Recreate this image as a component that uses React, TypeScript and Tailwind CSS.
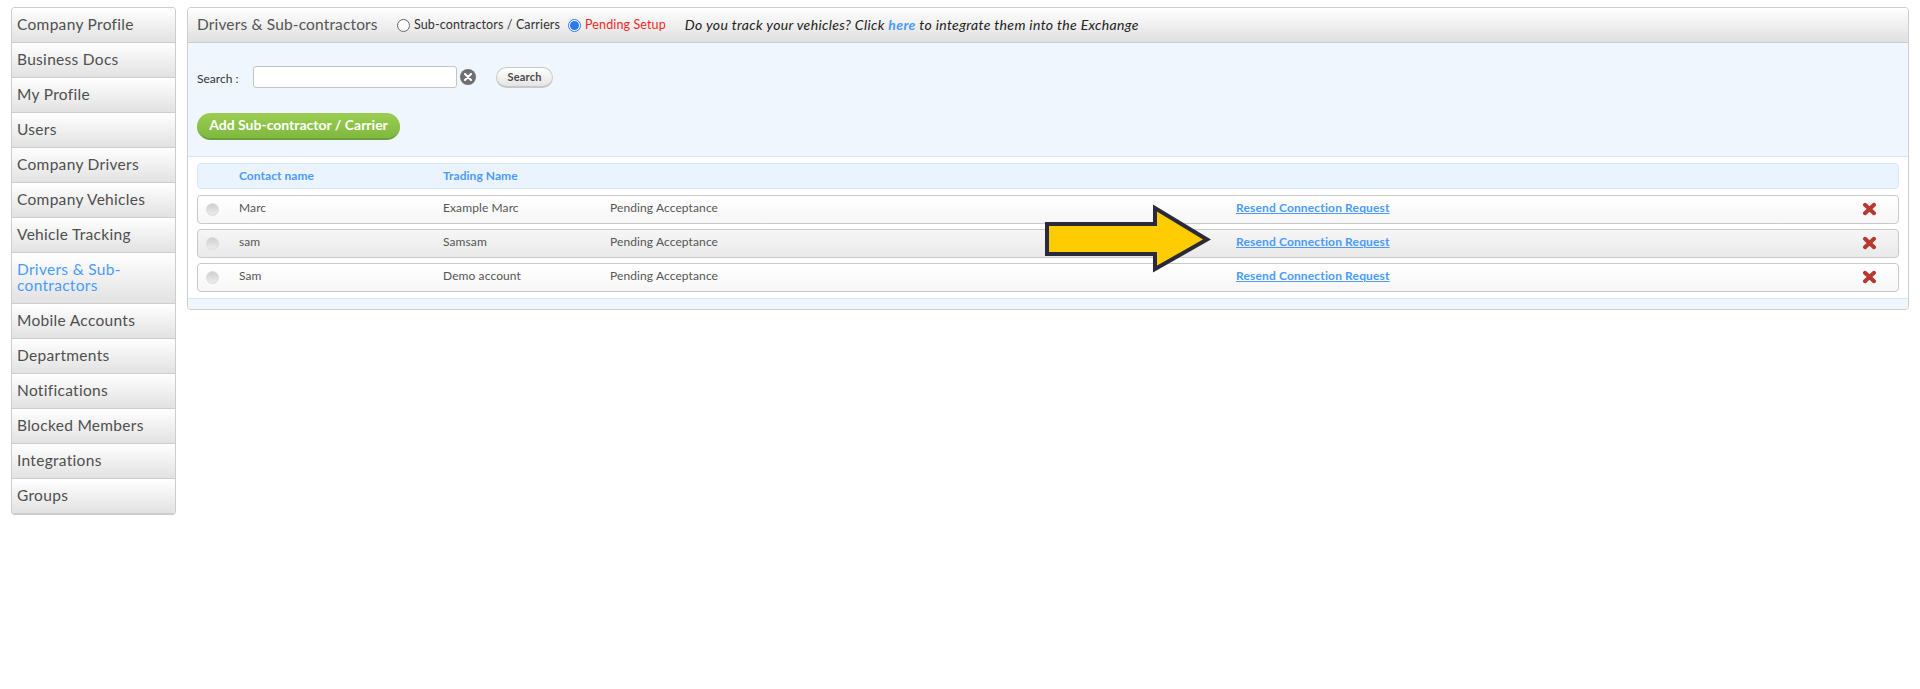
import React from 'react'

const menu = [
  'Company Profile',
  'Business Docs',
  'My Profile',
  'Users',
  'Company Drivers',
  'Company Vehicles',
  'Vehicle Tracking',
  'Drivers & Sub-contractors',
  'Mobile Accounts',
  'Departments',
  'Notifications',
  'Blocked Members',
  'Integrations',
  'Groups',
]

const rows = [
  { contact: 'Marc', trading: 'Example Marc', alt: false },
  { contact: 'sam', trading: 'Samsam', alt: true },
  { contact: 'Sam', trading: 'Demo account', alt: false },
]

function RemoveIcon() {
  return (
    <svg width="15" height="14" viewBox="0 0 15 14">
      <path d="M3 2.8 L12 11.2 M12 2.8 L3 11.2" stroke="#b8382f" strokeWidth="4" strokeLinecap="round" />
    </svg>
  )
}

function Sidebar() {
  return (
    <div className="w-[165px] shrink-0 rounded-[4px] border border-[#cdcdcd] border-b-2 overflow-hidden self-start">
      {menu.map((item) => {
        const active = item === 'Drivers & Sub-contractors'
        return (
          <div
            key={item}
            className={`flex items-center pl-[5px] pr-2 pb-[2px] bg-gradient-to-b from-white to-[#e2e2e2] border-b border-[#cdcdcd] last:border-b-0 last:h-[34px] text-[15.5px] leading-[16px] tracking-[0.3px] ${
              active ? 'h-[51px] text-[#4a9bff]' : 'h-[35px] text-[#4f4f4f]'
            }`}
          >
            {item}
          </div>
        )
      })}
    </div>
  )
}

function Header() {
  return (
    <div className="flex items-center h-[35px] pl-[9px] bg-gradient-to-b from-white to-[#e0e0e0] border-b border-[#cdcdcd]">
      <span className="text-[15.5px] tracking-[0.15px] text-[#555555] w-[200px]">Drivers &amp; Sub-contractors</span>
      <span className="w-[13px] h-[13px] rounded-full border border-[#666666] bg-white" />
      <span className="ml-[4px] text-[12.5px] tracking-[0.12px] text-[#333333]">Sub-contractors / Carriers</span>
      <span className="ml-[8px] w-[13px] h-[13px] rounded-full border border-[#2a7af0] bg-white flex items-center justify-center">
        <span className="w-[9px] h-[9px] rounded-full bg-[#2a7af0]" />
      </span>
      <span className="ml-[4px] text-[12.5px] tracking-[0.12px] text-[#f0291f]">Pending Setup</span>
      <span className="ml-[19px] pb-[2px] text-[14px] tracking-[0.35px] italic text-[#222222]">
        Do you track your vehicles? Click <b className="text-[#4a9bff]">here</b> to integrate them into the Exchange
      </span>
    </div>
  )
}

function Filters() {
  return (
    <div className="h-[114px] bg-[#eff6fe] border-b border-[#d5e7fa] pl-[9px]">
      <div className="flex items-center pt-[23px]">
        <span className="w-[56px] mt-[3px] text-[12px] text-[#333333]">Search :</span>
        <span className="w-[204px] h-[22px] rounded-[3px] border border-[#c4c4c4] bg-white" />
        <span className="ml-[3px] w-[16px] h-[16px] rounded-full bg-[#707070] flex items-center justify-center">
          <svg width="8" height="8" viewBox="0 0 8 8">
            <path d="M1 1 L7 7 M7 1 L1 7" stroke="white" strokeWidth="2" strokeLinecap="round" />
          </svg>
        </span>
        <span className="ml-[20px] w-[57px] h-[21px] pt-[1px] rounded-full border border-[#c8c8c8] border-b-2 bg-gradient-to-b from-white to-[#e4e4e4] flex items-center justify-center text-[11px] font-bold tracking-[0.2px] text-[#4a4a4a]">
          Search
        </span>
      </div>
      <div className="mt-[25px] pb-[2px] w-[203px] h-[27px] rounded-full bg-gradient-to-b from-[#9ccd50] to-[#7fb93f] border-b-2 border-[#6d9f3c] flex items-center justify-center text-[14px] font-bold text-white">
        Add Sub-contractor / Carrier
      </div>
    </div>
  )
}

function Rows() {
  return (
    <div className="px-[9px] pt-[6px] pb-[6px] flex flex-col gap-[5px] bg-white">
      <div className="h-[26px] mb-[1px] rounded-[4px] border border-[#d5e7fa] bg-[#eaf3fe] flex items-center text-[12px] tracking-[0.05px] font-bold text-[#4a9bff]">
        <span className="ml-[41px] w-[204px]">Contact name</span>
        <span>Trading Name</span>
      </div>
      {rows.map((row) => (
        <div
          key={row.contact}
          className={`h-[29px] pb-[3px] rounded-[4px] border border-[#c9c9c9] flex items-center text-[12px] tracking-[0.1px] text-[#555555] bg-gradient-to-b ${
            row.alt ? 'from-[#f6f6f6] to-[#eaeaea]' : 'from-white to-[#f7f7f7]'
          }`}
        >
          <span className="ml-[8px] w-[13px] h-[13px] shrink-0 mt-[3px] rounded-full bg-gradient-to-b from-[#cfcfcf] to-[#ececec] border border-[#dcdcdc]" />
          <span className="ml-[20px] w-[204px]">{row.contact}</span>
          <span className="w-[167px]">{row.trading}</span>
          <span className="w-[626px]">Pending Acceptance</span>
          <a className="text-[12px] font-bold tracking-[0.15px] text-[#4a9bff] underline">Resend Connection Request</a>
          <span className="ml-auto mr-[21px] mt-[2px] flex">
            <RemoveIcon />
          </span>
        </div>
      ))}
    </div>
  )
}

export default function App() {
  return (
    <div
      className="relative h-[689px] bg-white flex gap-[11px] pl-[11px] pr-[11px] pt-[7px]"
      style={{ fontFamily: 'Lato, "Open Sans", sans-serif' }}
    >
      <Sidebar />
      <div className="flex-1 self-start rounded-[4px] border border-[#cdcdcd] overflow-hidden">
        <Header />
        <Filters />
        <Rows />
        <div className="h-[11px] bg-[#eff6fe] border-t border-[#d5e7fa]" />
      </div>
      {/* callout arrow over the rows */}
      <svg className="absolute left-[1043px] top-[204px]" width="170" height="70" viewBox="0 0 170 70">
        <polygon
          points="4,20 112,20 112,4 164,35.5 112,65 112,50 4,50"
          fill="#ffcc00"
          stroke="#2a2a3a"
          strokeWidth="4"
        />
      </svg>
    </div>
  )
}
